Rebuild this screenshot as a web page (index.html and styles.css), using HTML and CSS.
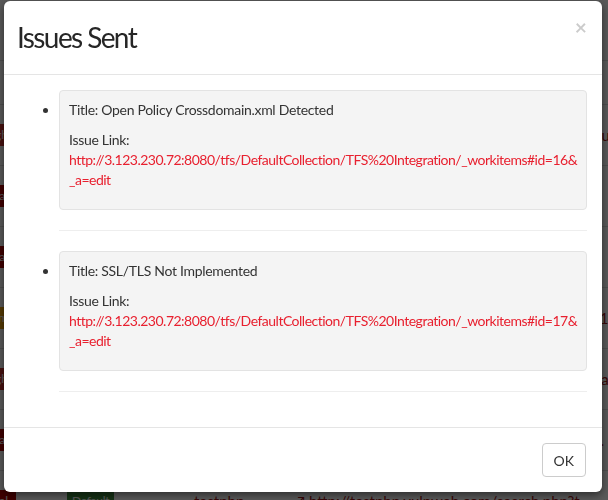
FILE: index.html
```html
<!DOCTYPE html>
<html>
<head>
<meta charset="utf-8">
<link rel="stylesheet" href="styles.css">
</head>
<body>
<div class="page">
  <div class="thead"></div>
  <div class="row"><span class="badge b-red">High</span><span></span><span class="cell">testphp</span><span class="cell url">http://testphp.vulnweb.com/search.php?test=quer</span></div>
  <div class="row"><span class="badge b-dark">Critical</span><span></span><span class="cell">testphp</span><span class="cell url"></span></div>
  <div class="row"><span class="badge b-dark">Critical</span><span></span><span class="cell">testphp</span><span class="cell url">http://testphp.vulnweb.com/showimage.php?fi</span></div>
  <div class="row"><span class="badge b-orange">Medium</span><span></span><span class="cell">testphp</span><span class="cell url">http://testphp.vulnweb.com/artists.php?artist=19.</span></div>
  <div class="row"><span class="badge b-red">High</span><span></span><span class="cell">testphp</span><span class="cell url">http://testphp.vulnweb.com/listproducts.php?cap</span></div>
  <div class="row"><span class="badge b-dark">Critical</span><span></span><span class="cell">testphp</span><span class="cell url">http://testphp.vulnweb.com/AJAX/index.php?t.</span></div>
  <div class="row"><span class="badge b-dark">Critical</span><span class="badge b-green">Default</span><span class="cell">testphp</span><span class="cell url">&#8599; http://testphp.vulnweb.com/search.php?t</span></div>
</div>
<div class="overlay"></div>
<div class="modal">
  <div class="modal-header">
    <h4 class="modal-title">Issues Sent</h4>
    <span class="close">&times;</span>
  </div>
  <div class="modal-body">
    <ul class="issues">
      <li>
        <div class="well">
          <p>Title: Open Policy Crossdomain.xml Detected</p>
          <p>Issue Link:<br><a href="#">http://3.123.230.72:8080/tfs/DefaultCollection/TFS%20Integration/_workitems#id=16&amp;<br>_a=edit</a></p>
        </div>
        <hr>
      </li>
      <li>
        <div class="well">
          <p>Title: SSL/TLS Not Implemented</p>
          <p>Issue Link:<br><a href="#">http://3.123.230.72:8080/tfs/DefaultCollection/TFS%20Integration/_workitems#id=17&amp;<br>_a=edit</a></p>
        </div>
        <hr>
      </li>
    </ul>
  </div>
  <div class="modal-footer">
    <button class="btn">OK</button>
  </div>
</div>
</body>
</html>
```
FILE: styles.css
```css
html, body {
  margin: 0;
  padding: 0;
  width: 608px;
  height: 500px;
  overflow: hidden;
  font-family: "Lato", "Liberation Sans", sans-serif;
  font-size: 14px;
  line-height: 20px;
  color: #333;
}
.page {
  background: #fff;
  height: 500px;
  padding-top: 60px;
  box-sizing: border-box;
  overflow: hidden;
}
.thead {
  height: 44px;
  border-top: 1px solid #ddd;
  box-sizing: border-box;
}
.row {
  height: 61px;
  border-top: 1px solid #ddd;
  display: grid;
  grid-template-columns: 16px 178px 100px 1fr;
  align-items: center;
  box-sizing: border-box;
  white-space: nowrap;
}
.badge {
  color: #fff;
  font-size: 12px;
  line-height: 16px;
  padding: 3px 8px;
  justify-self: end;
}
.b-red { background: #c9302c; }
.b-dark { background: #b20000; }
.b-orange { background: #f0a30a; }
.b-green { background: #3e8e3e; justify-self: start; margin-left: 51px; padding: 3px 5px; font-size: 12px; letter-spacing: -0.3px; }
.cell { color: #a01515; font-size: 15px; }
.url { overflow: visible; }
.overlay {
  position: fixed;
  inset: 0;
  background: rgba(0, 0, 0, 0.65);
}
.modal {
  position: fixed;
  left: 4px;
  top: 1px;
  width: 598px;
  background: #fff;
  border-radius: 6px;
  box-shadow: 0 3px 9px rgba(0, 0, 0, 0.5);
}
.modal-header {
  position: relative;
  padding: 15px;
  border-bottom: 1px solid #e5e5e5;
}
.modal-title {
  margin: 0 0 0 -2px;
  font-size: 28px;
  font-weight: 400;
  line-height: 43px;
  letter-spacing: -1.6px;
  color: #262626;
}
.close {
  position: absolute;
  right: 15px;
  top: 15px;
  font-size: 21px;
  font-weight: 700;
  line-height: 21px;
  color: #000;
  opacity: 0.2;
}
.modal-body {
  padding: 15px;
}
.issues {
  margin: 0;
  padding-left: 40px;
}
.well {
  background: #f4f4f4;
  border: 1px solid #e3e3e3;
  border-radius: 4px;
  padding: 9px;
  margin-bottom: 20px;
  letter-spacing: -0.3px;
}
.well p {
  margin: 0 0 10px;
}
.well a {
  color: #e8202f;
  text-decoration: none;
  white-space: nowrap;
  letter-spacing: -0.5px;
}
hr {
  margin: 20px 0;
  border: 0;
  border-top: 1px solid #eee;
}
.modal-footer {
  padding: 15px;
  border-top: 1px solid #e5e5e5;
  display: flex;
  justify-content: flex-end;
}
.btn {
  font-family: inherit;
  font-size: 14px;
  color: #333;
  background: #fff;
  border: 1px solid #ccc;
  border-radius: 4px;
  height: 34px;
  padding: 6px 11px;
  margin-right: 1px;
}
```
